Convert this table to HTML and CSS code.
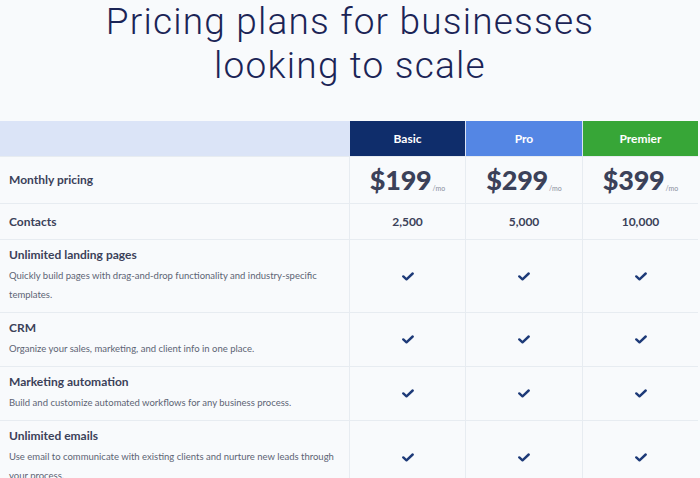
FILE: index.html
```html
<!DOCTYPE html>
<html lang="en">
<head>
<meta charset="utf-8">
<title>Pricing plans</title>
<link rel="stylesheet" href="styles.css">
</head>
<body>
<h1 class="title">Pricing plans for businesses<br>looking to scale</h1>
<div class="plans">
  <div class="row head">
    <div class="cell label"></div>
    <div class="cell plan basic">Basic</div>
    <div class="cell plan pro">Pro</div>
    <div class="cell plan premier">Premier</div>
  </div>
  <div class="row price-row">
    <div class="cell label"><span class="name">Monthly pricing</span></div>
    <div class="cell val"><span class="price">$199</span><span class="per">/mo</span></div>
    <div class="cell val"><span class="price">$299</span><span class="per">/mo</span></div>
    <div class="cell val"><span class="price">$399</span><span class="per">/mo</span></div>
  </div>
  <div class="row contacts-row">
    <div class="cell label"><span class="name">Contacts</span></div>
    <div class="cell val num">2,500</div>
    <div class="cell val num">5,000</div>
    <div class="cell val num">10,000</div>
  </div>
  <div class="row feature">
    <div class="cell label">
      <div class="name">Unlimited landing pages</div>
      <div class="desc">Quickly build pages with drag-and-drop functionality and industry-specific templates.</div>
    </div>
    <div class="cell val"><svg class="check" viewBox="0 0 12 9"><path d="M1.3 4.4 L4.5 7.3 L10.7 1.5"/></svg></div>
    <div class="cell val"><svg class="check" viewBox="0 0 12 9"><path d="M1.3 4.4 L4.5 7.3 L10.7 1.5"/></svg></div>
    <div class="cell val"><svg class="check" viewBox="0 0 12 9"><path d="M1.3 4.4 L4.5 7.3 L10.7 1.5"/></svg></div>
  </div>
  <div class="row feature">
    <div class="cell label">
      <div class="name">CRM</div>
      <div class="desc">Organize your sales, marketing, and client info in one place.</div>
    </div>
    <div class="cell val"><svg class="check" viewBox="0 0 12 9"><path d="M1.3 4.4 L4.5 7.3 L10.7 1.5"/></svg></div>
    <div class="cell val"><svg class="check" viewBox="0 0 12 9"><path d="M1.3 4.4 L4.5 7.3 L10.7 1.5"/></svg></div>
    <div class="cell val"><svg class="check" viewBox="0 0 12 9"><path d="M1.3 4.4 L4.5 7.3 L10.7 1.5"/></svg></div>
  </div>
  <div class="row feature">
    <div class="cell label">
      <div class="name">Marketing automation</div>
      <div class="desc">Build and customize automated workflows for any business process.</div>
    </div>
    <div class="cell val"><svg class="check" viewBox="0 0 12 9"><path d="M1.3 4.4 L4.5 7.3 L10.7 1.5"/></svg></div>
    <div class="cell val"><svg class="check" viewBox="0 0 12 9"><path d="M1.3 4.4 L4.5 7.3 L10.7 1.5"/></svg></div>
    <div class="cell val"><svg class="check" viewBox="0 0 12 9"><path d="M1.3 4.4 L4.5 7.3 L10.7 1.5"/></svg></div>
  </div>
  <div class="row feature">
    <div class="cell label">
      <div class="name">Unlimited emails</div>
      <div class="desc">Use email to communicate with existing clients and nurture new leads through your process.</div>
    </div>
    <div class="cell val"><svg class="check" viewBox="0 0 12 9"><path d="M1.3 4.4 L4.5 7.3 L10.7 1.5"/></svg></div>
    <div class="cell val"><svg class="check" viewBox="0 0 12 9"><path d="M1.3 4.4 L4.5 7.3 L10.7 1.5"/></svg></div>
    <div class="cell val"><svg class="check" viewBox="0 0 12 9"><path d="M1.3 4.4 L4.5 7.3 L10.7 1.5"/></svg></div>
  </div>
</div>
</body>
</html>
```
FILE: styles.css
```css
html, body {
  margin: 0;
  padding: 0;
  background: #f8fafc;
}
body {
  font-family: Lato, "Liberation Sans", sans-serif;
  color: #3b4159;
  width: 700px;
  height: 478px;
  overflow: hidden;
}
.title {
  margin: 0;
  height: 121px;
  box-sizing: border-box;
  padding: 0;
  text-align: center;
  font-family: Roboto, Lato, sans-serif;
  font-weight: 300;
  font-size: 37px;
  line-height: 44px;
  letter-spacing: 1.2px;
  color: #1b2456;
}
.plans {
  width: 698px;
}
.row {
  display: grid;
  grid-template-columns: 349px 116px 117px 116px;
  border-bottom: 1px solid #e7ecf1;
}
.cell {
  box-sizing: border-box;
}
.cell.val, .cell.plan {
  border-left: 1px solid #e7ecf1;
  display: flex;
  align-items: center;
  justify-content: center;
}
.head {
  height: 36px;
  box-sizing: border-box;
}
.head .label {
  background: #dbe4f7;
}
.head .plan {
  color: #ffffff;
  font-weight: 700;
  font-size: 12px;
  border-left: 1px solid #dbe4f7;
}
.basic { background: #0f2d6b; }
.pro { background: #5486e4; }
.premier { background: #37a637; }
.label {
  padding-left: 9px;
  display: flex;
  flex-direction: column;
  justify-content: center;
}
.name {
  font-weight: 700;
  font-size: 12px;
  line-height: 16px;
  color: #3b4159;
}
.price-row { height: 47px; box-sizing: border-box; }
.contacts-row { height: 36px; box-sizing: border-box; }
.price {
  font-weight: 900;
  font-size: 27px;
  line-height: 30px;
  color: #3b4159;
  letter-spacing: -0.2px;
}
.per {
  font-size: 7px;
  color: #8a8f9c;
  align-self: flex-end;
  margin-bottom: 11px;
  margin-left: 1px;
}
.num {
  font-weight: 700;
  font-size: 12px;
  color: #3b4159;
}
.feature .label {
  padding-top: 7px;
  padding-bottom: 8px;
  justify-content: flex-start;
}
.desc {
  font-size: 9.5px;
  line-height: 19px;
  color: #5d6474;
  margin-top: 3px;
  padding-right: 14px;
}
.check {
  width: 12px;
  height: 9px;
  fill: none;
  stroke: #1d3a78;
  stroke-width: 2.4;
  stroke-linecap: round;
  stroke-linejoin: round;
}
```
